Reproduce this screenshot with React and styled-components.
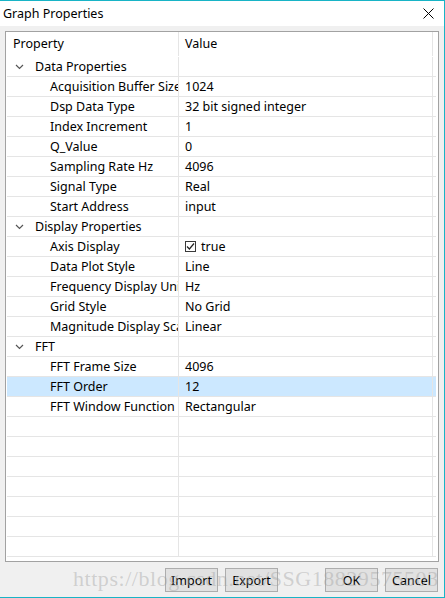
import React from 'react';
import styled, { createGlobalStyle } from 'styled-components';

const GlobalStyle = createGlobalStyle`
  html, body {
    margin: 0;
    padding: 0;
    background: #ffffff;
  }
  * {
    box-sizing: border-box;
  }
`;

const Window = styled.div`
  position: relative;
  width: 445px;
  height: 598px;
  background: #f0f0f0;
  border-top: 1px solid #18b4c6;
  border-right: 1px solid #18b4c6;
  border-bottom: 1px solid #18b4c6;
  display: flex;
  flex-direction: column;
  font-family: 'Noto Sans', 'Open Sans', sans-serif;
  font-size: 12.5px;
  color: #000;
  overflow: hidden;
`;

const TitleBar = styled.div`
  height: 25px;
  background: #ffffff;
  display: flex;
  align-items: center;
  justify-content: space-between;
  padding: 0 10px 0 3px;
  font-size: 12.5px;
`;

const Client = styled.div`
  flex: 1;
  display: flex;
  flex-direction: column;
  padding: 5px 5px 0 5px;
`;

const Grid = styled.div`
  width: 434px;
  height: 531px;
  background: #ffffff;
  border: 1px solid #a2a2a2;
  padding: 0 1px 0 1px;
  overflow: hidden;
`;

const Row = styled.div`
  display: grid;
  grid-template-columns: 172px 254px 1fr;
  height: ${(p) => (p.$header ? '25px' : '20px')};
  border-bottom: 1px solid ${(p) => (p.$header ? 'transparent' : '#e5e5e5')};
  background: ${(p) => (p.$selected ? '#cce8ff' : 'transparent')};
  line-height: ${(p) => (p.$header ? '24px' : '19px')};
  margin-right: 1px;
`;

const Cell = styled.div`
  border-right: ${(p) => (p.$last ? 'none' : '1px solid #e5e5e5')};
  padding-left: ${(p) => p.$indent || 6}px;
  white-space: nowrap;
  overflow: hidden;
  display: flex;
  align-items: center;
`;

const Chevron = styled.svg`
  width: 9px;
  height: 6px;
  margin-right: 11px;
  flex: none;
`;

const Check = styled.span`
  width: 11px;
  height: 11px;
  border: 1px solid #3a3a3a;
  background: #fff;
  display: inline-flex;
  align-items: center;
  justify-content: center;
  margin-right: 5px;
`;

const Footer = styled.div`
  display: flex;
  justify-content: flex-end;
  padding: 6px 1px 0 0;
`;

const Group = styled.div`
  display: flex;
  gap: 7px;
  margin-right: ${(p) => p.$gapRight || 0}px;
`;

const Button = styled.button`
  width: 53px;
  height: 24px;
  background: #e1e1e1;
  border: 1px solid #adadad;
  font-family: 'Noto Sans', 'Open Sans', sans-serif;
  font-size: 12.5px;
  color: #000;
  padding: 0;
`;

const Watermark = styled.div`
  position: absolute;
  left: 73px;
  top: 565px;
  font-family: 'Liberation Serif', serif;
  font-size: 22px;
  letter-spacing: 0.55px;
  color: rgba(160, 160, 160, 0.42);
  pointer-events: none;
  white-space: nowrap;
`;

const groups = [
  {
    name: 'Data Properties',
    items: [
      ['Acquisition Buffer Size', '1024'],
      ['Dsp Data Type', '32 bit signed integer'],
      ['Index Increment', '1'],
      ['Q_Value', '0'],
      ['Sampling Rate Hz', '4096'],
      ['Signal Type', 'Real'],
      ['Start Address', 'input'],
    ],
  },
  {
    name: 'Display Properties',
    items: [
      ['Axis Display', 'true', true],
      ['Data Plot Style', 'Line'],
      ['Frequency Display Unit', 'Hz'],
      ['Grid Style', 'No Grid'],
      ['Magnitude Display Scale', 'Linear'],
    ],
  },
  {
    name: 'FFT',
    items: [
      ['FFT Frame Size', '4096'],
      ['FFT Order', '12', false, true],
      ['FFT Window Function', 'Rectangular'],
    ],
  },
];

function ChevronDown() {
  return (
    <Chevron viewBox="0 0 9 6">
      <path d="M1 1 L4.5 4.5 L8 1" fill="none" stroke="#555" strokeWidth="1.2" />
    </Chevron>
  );
}

export default function App() {
  return (
    <>
      <GlobalStyle />
      <Window>
        <TitleBar>
          <span>Graph Properties</span>
          <svg width="11" height="11" viewBox="0 0 11 11">
            <path d="M0.5 0.5 L10.5 10.5 M10.5 0.5 L0.5 10.5" stroke="#000" strokeWidth="1" />
          </svg>
        </TitleBar>
        <Client>
          <Grid>
            <Row $header>
              <Cell>Property</Cell>
              <Cell>Value</Cell>
              <Cell $last />
            </Row>
            {groups.map((g) => (
              <React.Fragment key={g.name}>
                <Row>
                  <Cell $indent={8}>
                    <ChevronDown />
                    {g.name}
                  </Cell>
                  <Cell />
                  <Cell $last />
                </Row>
                {g.items.map(([label, value, checkbox, selected]) => (
                  <Row key={label} $selected={selected}>
                    <Cell $indent={43}>{label}</Cell>
                    <Cell>
                      {checkbox && (
                        <Check>
                          <svg width="9" height="9" viewBox="0 0 9 9">
                            <path d="M1 4.5 L3.4 7 L8 1.5" fill="none" stroke="#222" strokeWidth="1.2" />
                          </svg>
                        </Check>
                      )}
                      {value}
                    </Cell>
                    <Cell $last />
                  </Row>
                ))}
              </React.Fragment>
            ))}
            {Array.from({ length: 7 }).map((_, i) => (
              <Row key={'e' + i}>
                <Cell />
                <Cell />
                <Cell $last />
              </Row>
            ))}
          </Grid>
          <Footer>
            <Group $gapRight={47}>
              <Button>Import</Button>
              <Button>Export</Button>
            </Group>
            <Group>
              <Button>OK</Button>
              <Button>Cancel</Button>
            </Group>
          </Footer>
        </Client>
        <Watermark>https://blog.csdn.net/SSG18829575503</Watermark>
      </Window>
    </>
  );
}
